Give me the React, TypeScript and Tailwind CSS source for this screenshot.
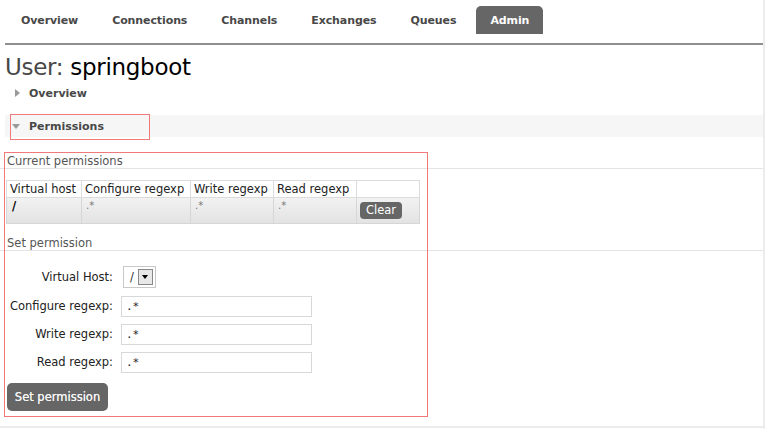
import React from 'react'

const TABS = ['Overview', 'Connections', 'Channels', 'Exchanges', 'Queues', 'Admin']

function Triangle({ open }: { open?: boolean }) {
  return open ? (
    <span className="inline-block w-0 h-0 border-l-[4px] border-r-[4px] border-t-[5px] border-l-transparent border-r-transparent border-t-[#999]" />
  ) : (
    <span className="inline-block w-0 h-0 border-t-[4px] border-b-[4px] border-l-[5px] border-t-transparent border-b-transparent border-l-[#999]" />
  )
}

function Field({ label, value }: { label: string; value: string }) {
  return (
    <div className="flex items-center h-[21px]">
      <label className="w-[113px] text-right text-[#222]">{label}</label>
      <div className="ml-[8px] w-[191px] h-[21px] border border-[#d8d8d8] bg-white flex items-center pl-[4px] font-['DejaVu_Sans_Mono',monospace] text-[11px] text-[#222]">
        {value}
      </div>
    </div>
  )
}

export default function App() {
  return (
    <div className="w-[767px] h-[429px] bg-white overflow-hidden font-['DejaVu_Sans',sans-serif] text-[11.5px] leading-[15px] text-[#444]">
      <div className="relative w-[765px] h-[429px] border-r-2 border-[#ececec]">
        {/* Nav */}
        <div className="pl-[5px] pt-[6px]">
          <ul className="flex gap-[6px] pl-[2px] h-[28px]">
            {TABS.map(t => (
              <li
                key={t}
                className={`px-[14px] h-[28px] pt-[1px] flex items-center font-bold text-[11px] tracking-[-0.1px] rounded-t-[5px] ${
                  t === 'Admin' ? 'bg-[#666] text-white' : 'text-[#484848]'
                }`}
              >
                {t}
              </li>
            ))}
          </ul>
          <div className="mt-[9px] h-[2px] bg-[#8f8f8f]" />
        </div>

        {/* Title */}
        <h1 className="pl-[5px] mt-[9px] text-[23px] leading-[26px] tracking-[-0.3px] text-[#484848]">
          User: <span className="text-black">springboot</span>
        </h1>

        {/* Overview section */}
        <div className="flex items-center h-[18px] mt-[4px] pl-[15px] gap-[9px] font-bold text-[11px] text-[#484848]">
          <Triangle />
          <span>Overview</span>
        </div>

        {/* Permissions section */}
        <div className="mt-[13px] ml-[5px] h-[22px] bg-[#f6f6f6] flex items-center pl-[7px] gap-[9px] font-bold text-[11px] text-[#484848]">
          <Triangle open />
          <span>Permissions</span>
        </div>
        <div className="absolute left-[10px] top-[114px] w-[140px] h-[26px] border border-[#f07a7a]" />

        {/* Current permissions */}
        <div className="mt-[16px] h-[16px] pl-[7px] pt-[1px] border-b border-[#e4e4e4] text-[#555]">Current permissions</div>
        <table className="ml-[6px] mt-[11px] border-collapse text-[11.5px] leading-[15px] text-[#222]">
          <thead>
            <tr className="h-[17px] bg-white">
              <th className="w-[75px] p-0 border border-[#dcdcdc] font-normal text-left pl-[3px]">Virtual host</th>
              <th className="w-[109px] p-0 border border-[#dcdcdc] font-normal text-left pl-[3px]">Configure regexp</th>
              <th className="w-[83px] p-0 border border-[#dcdcdc] font-normal text-left pl-[3px]">Write regexp</th>
              <th className="w-[83px] p-0 border border-[#dcdcdc] font-normal text-left pl-[3px]">Read regexp</th>
              <th className="w-[63px] p-0 border border-[#dcdcdc]" />
            </tr>
          </thead>
          <tbody>
            <tr className="h-[26px] bg-gradient-to-b from-[#f2f2f2] to-[#e2e2e2]">
              <td className="border border-[#d6d6d6] pl-[5px] align-top pt-[1px] font-bold text-black">/</td>
              <td className="border border-[#d6d6d6] pl-[4px] align-top text-[#777] text-[10px]">.*</td>
              <td className="border border-[#d6d6d6] pl-[4px] align-top text-[#777] text-[10px]">.*</td>
              <td className="border border-[#d6d6d6] pl-[4px] align-top text-[#777] text-[10px]">.*</td>
              <td className="border border-[#d6d6d6] pl-[3px]">
                <button className="h-[17px] px-[6px] rounded-[4px] bg-[#666] text-white text-[11.5px] leading-[17px]">Clear</button>
              </td>
            </tr>
          </tbody>
        </table>

        {/* Set permission */}
        <div className="mt-[11px] h-[16px] pl-[7px] pt-[1px] border-b border-[#e4e4e4] text-[#555]">Set permission</div>
        <div className="mt-[15px] flex flex-col gap-[7px]">
          <div className="flex items-center h-[22px] mb-[1px]">
            <label className="w-[113px] text-right text-[#222]">Virtual Host:</label>
            <div className="ml-[10px] w-[33px] h-[22px] border border-[#c8c8c8] flex items-center pl-[6px] gap-[4px] text-[#333]">
              <span>/</span>
              <span className="w-[15px] h-[16px] border border-[#888] bg-[#e8e8e8] flex items-center justify-center">
                <span className="w-0 h-0 border-l-[3px] border-r-[3px] border-t-[4px] border-l-transparent border-r-transparent border-t-black" />
              </span>
            </div>
          </div>
          <Field label="Configure regexp:" value=".*" />
          <Field label="Write regexp:" value=".*" />
          <Field label="Read regexp:" value=".*" />
        </div>
        <button className="ml-[7px] mt-[10px] w-[101px] h-[28px] rounded-[5px] bg-[#666] text-[#f4f4f4] text-[11.5px] whitespace-nowrap [text-shadow:0_0_0.4px_#fff]">
          Set permission
        </button>
        <div className="absolute left-[4px] top-[152px] w-[424px] h-[265px] border border-[#f07a7a]" />
        <div className="absolute left-0 right-0 top-[426px] h-[2px] bg-[#ececec]" />
      </div>
    </div>
  )
}
